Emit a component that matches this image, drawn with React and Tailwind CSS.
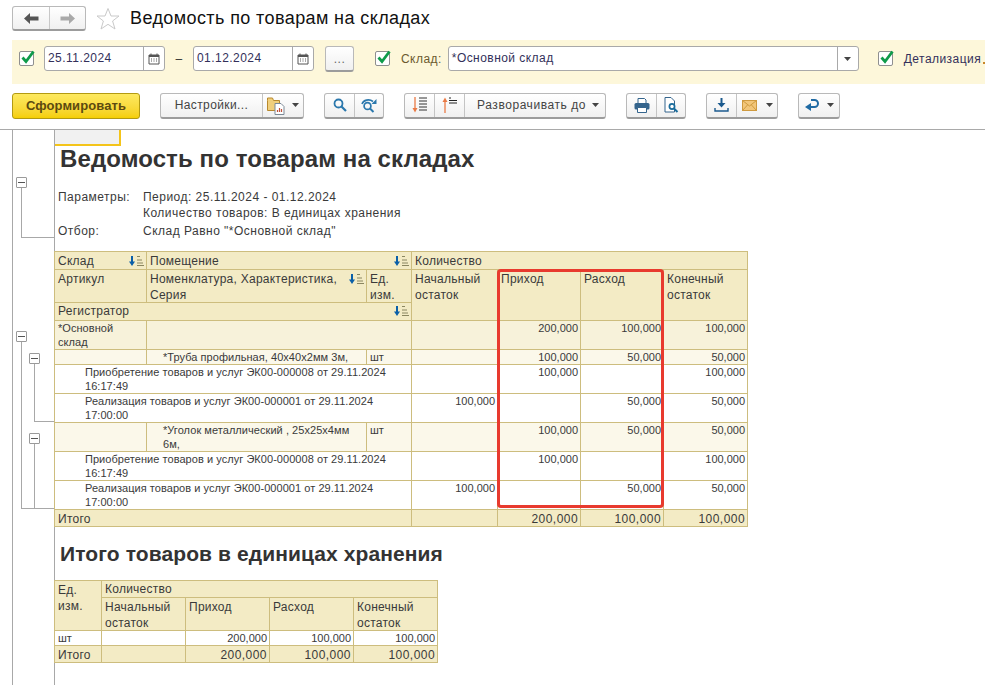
import React from "react";

const Caret = () => (
  <svg width="7" height="4" viewBox="0 0 7 4" className="shrink-0"><path d="M0 0h7L3.5 4z" fill="#444" /></svg>
);
const Check = () => (
  <span className="relative block w-[15px] h-[15px] border border-[#8f8f8f] rounded-[2px] bg-white shrink-0">
    <svg width="17" height="16" viewBox="0 0 17 16" className="absolute left-[-1px] top-[-3px]">
      <path d="M3.5 8.5 7 12.5 14.5 2.500" fill="none" stroke="#0f9b4a" strokeWidth="2.8" />
    </svg>
  </span>
);
const Cal = () => (
  <svg width="12" height="12" viewBox="0 0 12 12">
    <path d="M1 2h10v9H1z" fill="#fff" stroke="#555" />
    <path d="M1 2h10v2H1z" fill="#555" />
    <path d="M3 0.5v2M9 0.5v2" stroke="#555" />
    <path d="M3 6h1M5.5 6h1M8 6h1M3 8h1M5.5 8h1M8 8h1" stroke="#555" />
  </svg>
);
const SortIcon = () => (
  <svg width="17" height="12" viewBox="0 0 17 12" className="shrink-0">
    <path d="M4 1v6" stroke="#0a5fa8" strokeWidth="2" />
    <path d="M1 6.500h6L4 11z" fill="#0a5fa8" />
    <path d="M9 1.500h3M9 5h5M9 8h6M9 10.500h7" stroke="#8a8660" strokeWidth="1" />
  </svg>
);
const Seg = ({ className = "", children }) => (
  <div className={`flex items-center justify-center h-full border-r border-[#c4c4c4] last:border-r-0 ${className}`}>{children}</div>
);
const Group = ({ className = "", children }) => (
  <div className={`flex items-stretch h-[26px] rounded-[3px] border border-[#b9b9b9] border-b-[#9c9c9c] border-b-2 bg-gradient-to-b from-white to-[#f0f0f0] shrink-0 ${className}`}>{children}</div>
);

const Cell = ({ className = "", children, ...rest }) => (
  <td {...rest} className={`border border-[#cdbd7e] align-top p-0 overflow-hidden ${className}`}>{children}</td>
);
const H = ({ className = "pt-[1px]", sort, nudge, children, ...rest }) => (
  <Cell {...rest} className={`bg-[#f3ebc5] text-[12px] leading-[16px] tracking-[0.25px] text-[#3a3a3a] pl-[3px] ${className}`}>
    {sort ? (
      <div className={`flex justify-between ${nudge ? "translate-y-[1px]" : ""}`}>
        <span>{children}</span>
        <span className="pt-[2px] pr-[1px]"><SortIcon /></span>
      </div>
    ) : nudge ? <div className="translate-y-[1px]">{children}</div> : children}
  </Cell>
);
const Num = ({ bg, size = "s", children }) => (
  <Cell className={`${bg} text-right pr-[2px] ${size === "s" ? "text-[11px] leading-[14px]" : "text-[12px] leading-[16px] tracking-[0.45px]"} text-[#3a3a3a]`}>
    {size === "s" ? children : <div className="translate-y-[1px]">{children}</div>}
  </Cell>
);
const Txt = ({ className = "", children, ...rest }) => (
  <Cell {...rest} className={`text-[11px] leading-[14px] tracking-[0.05px] text-[#3a3a3a] ${className}`}>{children}</Cell>
);

const DocRow = ({ n, a, b, c, d, t }) => (
  <tr className="h-[29px]">
    <Txt colSpan={3} className="bg-white pl-[30px]">{n}<br />{t}</Txt>
    <Num bg="bg-white">{a}</Num><Num bg="bg-white">{b}</Num><Num bg="bg-white">{c}</Num><Num bg="bg-white">{d}</Num>
  </tr>
);
const NomRow = ({ h, children, ...v }) => (
  <tr className={h}>
    <Cell className="bg-[#fbf8ea]" />
    <Txt className="bg-[#fbf8ea] pl-[16px] pr-[10px]">{children}</Txt>
    <Txt className="bg-[#fbf8ea] pl-[3px]">шт</Txt>
    <Num bg="bg-[#fbf8ea]" />
    <Num bg="bg-[#fbf8ea]">{v.a}</Num><Num bg="bg-[#fbf8ea]">{v.b}</Num><Num bg="bg-[#fbf8ea]">{v.c}</Num>
  </tr>
);

const Minus = ({ x, y }) => (
  <span className="absolute w-[11px] h-[11px] border border-[#9a9a9a] bg-white flex items-center justify-center rounded-[1px]" style={{ left: x, top: y }}>
    <span className="block w-[7px] h-px bg-[#555]" />
  </span>
);
const Tree = ({ x, y, h, w }) => (
  <span className="absolute border-l border-b border-[#a8a8a8]" style={{ left: x, top: y, height: h, width: w }} />
);

export default function App() {
  return (
    <div className="w-[985px] h-[685px] overflow-hidden bg-white font-['Liberation_Sans',Arial,sans-serif] text-[#333]">
      {/* title bar */}
      <div className="flex items-center h-[40px] pl-[12px] pb-[3px]">
        <div className="flex h-[25px] w-[74px] rounded-[3px] border border-[#b9b9b9] border-b-2 border-b-[#9c9c9c] bg-gradient-to-b from-white to-[#f0f0f0]">
          <div className="w-[37px] flex items-center justify-center border-r border-[#c8c8c8]">
            <svg width="15" height="11" viewBox="0 0 15 11"><path d="M0 5.500 6 0v3.500h8.500v4H6V11z" fill="#555" /></svg>
          </div>
          <div className="flex-1 flex items-center justify-center">
            <svg width="15" height="11" viewBox="0 0 15 11"><path d="M15 5.500 9 0v3.500H.5v4H9V11z" fill="#a9a9a9" /></svg>
          </div>
        </div>
        <svg width="24" height="24" viewBox="0 0 24 24" className="ml-[10px]">
          <path d="M12 1.500 15 9h8l-6.400 5 2.400 8-7-4.700L5 22l2.400-8L1 9h8z" fill="#fff" stroke="#c9c9c9" />
        </svg>
        <div className="ml-[10px] text-[18px] tracking-[0.4px] text-[#111]">Ведомость по товарам на складах</div>
      </div>

      {/* filter band */}
      <div className="flex items-center ml-[12px] h-[44px] bg-[#fdf7da] pl-[7px] pb-[7px] text-[12px] tracking-[0.45px] whitespace-nowrap overflow-hidden">
        <Check />
        <div className="ml-[10px] w-[121px] h-[25px] shrink-0 border border-[#a9a9a9] rounded-[3px] bg-white flex">
          <div className="flex-1 pl-[3px] leading-[23px] text-[#33305a]">25.11.2024</div>
          <div className="w-[21px] border-l border-[#a9a9a9] flex items-center justify-center"><Cal /></div>
        </div>
        <div className="w-[28px] shrink-0 text-center text-[#333]">–</div>
        <div className="w-[121px] h-[25px] shrink-0 border border-[#a9a9a9] rounded-[3px] bg-white flex">
          <div className="flex-1 pl-[3px] leading-[23px] text-[#33305a]">01.12.2024</div>
          <div className="w-[21px] border-l border-[#a9a9a9] flex items-center justify-center"><Cal /></div>
        </div>
        <div className="ml-[11px] w-[29px] h-[26px] shrink-0 rounded-[3px] border border-[#b9b9b9] border-b-2 border-b-[#9c9c9c] bg-gradient-to-b from-white to-[#f0f0f0] text-center leading-[24px] text-[#666]">...</div>
        <div className="ml-[21px]"><Check /></div>
        <div className="ml-[11px] text-[#6b5a2e]">Склад:</div>
        <div className="ml-[6px] w-[411px] h-[25px] shrink-0 border border-[#a9a9a9] rounded-[3px] bg-white flex">
          <div className="flex-1 pl-[3px] leading-[23px] text-[#33305a]">*Основной склад</div>
          <div className="w-[21px] border-l border-[#a9a9a9] flex items-center justify-center"><Caret /></div>
        </div>
        <div className="ml-[19px]"><Check /></div>
        <div className="ml-[11px] text-[#33305a]">Детализация</div>
        <span className="ml-[2px] mt-[9px] block w-[2px] h-[2px] bg-[#c8872a] shrink-0" />
      </div>

      {/* toolbar */}
      <div className="flex items-center h-[46px] pl-[12px] pb-[2px] text-[12px] tracking-[0.55px] text-[#444] border-b border-[#a9a9a9]">
        <div className="w-[128px] h-[26px] rounded-[3px] border border-[#b39a12] bg-gradient-to-b from-[#fde95e] to-[#f5cf00] text-center leading-[24px] font-bold text-[#5c4a10] text-[13px] tracking-[0.1px]">Сформировать</div>
        <Group className="ml-[20px] w-[144px]">
          <Seg className="w-[102px] tracking-[0.4px]">Настройки...</Seg>
          <Seg className="flex-1 gap-[7px]">
            <svg width="18" height="19" viewBox="0 0 18 19">
              <path d="M.5 4.500V2h5l1 2.500h6v10H.5z" fill="#f0cf7c" stroke="#b8892d" />
              <path d="M8 7.500h6l3 3v8H8z" fill="#fff" stroke="#7c8a97" />
              <path d="M10.500 16v-2M12.500 16v-4M14.500 16v-3" stroke="#c0503a" strokeWidth="1.2" />
            </svg>
            <Caret />
          </Seg>
        </Group>
        <Group className="ml-[20px] w-[60px]">
          <Seg className="w-[30px]">
            <svg width="14" height="14" viewBox="0 0 14 14"><circle cx="5.500" cy="5.500" r="4" fill="none" stroke="#2b78ad" strokeWidth="1.8" /><path d="m8.500 8.500 4.500 4.500" stroke="#2b78ad" strokeWidth="2.2" /></svg>
          </Seg>
          <Seg className="flex-1">
            <svg width="16" height="15" viewBox="0 0 16 15"><circle cx="6.500" cy="8" r="3.400" fill="none" stroke="#2b78ad" strokeWidth="1.7" /><path d="m9 10.500 3.500 3.500" stroke="#2b78ad" strokeWidth="2" /><path d="M1 6C2.500 2 8 .5 12 3.500" fill="none" stroke="#2b78ad" strokeWidth="1.6" /><path d="M15.500 1v5h-5z" fill="#2b78ad" /></svg>
          </Seg>
        </Group>
        <Group className="ml-[20px] w-[202px]">
          <Seg className="w-[30px]">
            <svg width="16" height="16" viewBox="0 0 16 16"><path d="M3 0v12" stroke="#ea7a45" strokeWidth="1.3" /><path d="M.5 11h5L3 15.500z" fill="#ea7a45" /><path d="M7 1h8M7 4h8M7 7h8M7 10h8M7 13h8" stroke="#333" strokeWidth="1" /></svg>
          </Seg>
          <Seg className="w-[30px]">
            <svg width="16" height="16" viewBox="0 0 16 16"><path d="M3 4v12" stroke="#ea7a45" strokeWidth="1.3" /><path d="M.5 5h5L3 .5z" fill="#ea7a45" /><path d="M7 1h2M7 3.500h8M7 6h8" stroke="#222" strokeWidth="1.1" /></svg>
          </Seg>
          <Seg className="flex-1 gap-[6px] pl-[6px]">Разворачивать до<Caret /></Seg>
        </Group>
        <Group className="ml-[20px] w-[60px]">
          <Seg className="w-[30px]">
            <svg width="16" height="15" viewBox="0 0 16 15"><path d="M4 5V.5h6.500L12 2v3" fill="#fff" stroke="#35658d" /><rect x=".5" y="5" width="15" height="6.500" rx="1.500" fill="#35658d" /><path d="M3.500 9.500h9v5h-9z" fill="#fff" stroke="#35658d" /></svg>
          </Seg>
          <Seg className="flex-1">
            <svg width="15" height="16" viewBox="0 0 15 16"><path d="M1 .5h6l3.500 3.500v11H1z" fill="#fff" stroke="#35658d" /><circle cx="8" cy="9.500" r="2.600" fill="#fff" stroke="#1a6c9c" strokeWidth="1.7" /><path d="m10 11.500 3.500 3.500" stroke="#1a6c9c" strokeWidth="2" /></svg>
          </Seg>
        </Group>
        <Group className="ml-[20px] w-[72px]">
          <Seg className="w-[30px]">
            <svg width="15" height="14" viewBox="0 0 15 14"><path d="M6.500 0h2v5h3L7.500 9.500 3.500 5h3z" fill="#1b5a8e" /><path d="M1 10v3h13v-3" fill="none" stroke="#1b5a8e" strokeWidth="1.4" /></svg>
          </Seg>
          <Seg className="flex-1 gap-[9px]">
            <svg width="15" height="11" viewBox="0 0 15 11"><rect x=".5" y=".5" width="14" height="10" fill="#f2c67a" stroke="#cf9a3f" /><path d="m.5.5 7 5.500 7-5.500M.5 10.500l5-5.500M14.500 10.500l-5-5.500" fill="none" stroke="#cf9a3f" /></svg>
            <Caret />
          </Seg>
        </Group>
        <Group className="ml-[20px] w-[42px]">
          <Seg className="flex-1 gap-[8px]">
            <svg width="14" height="13" viewBox="0 0 14 13"><path d="M6 1h3.500a3.500 3.500 0 0 1 0 7H5" fill="none" stroke="#1f6aa3" strokeWidth="2" /><path d="M6 4v8L0 8z" fill="#1f6aa3" /></svg>
            <Caret />
          </Seg>
        </Group>
      </div>

      {/* spreadsheet */}
      <div className="flex ml-[12px] h-[555px]">
        <div className="relative w-[43px] shrink-0 border-l border-r border-[#a8a8a8]">
          <Tree x={8} y={57} h={51} w={33} />
          <Minus x={3} y={47} />
          <Tree x={8} y={211} h={168} w={33} />
          <Minus x={3} y={201} />
          <Tree x={21} y={232} h={60} w={20} />
          <Minus x={16} y={223} />
          <Tree x={21} y={313} h={66} w={20} />
          <Minus x={16} y={303} />
        </div>

        <div className="relative flex-1">
          {/* current-cell marker */}
          <div className="absolute left-0 top-0 w-[66px] h-[16px] bg-[#f1f1f1] border-r-2 border-b-2 border-[#f4c41a]" />

          <h1 className="pt-[15px] pl-[5px] h-[59px] text-[24px] leading-[28px] font-bold text-[#333] tracking-[0.1px]">Ведомость по товарам на складах</h1>

          <div className="pl-[3px] h-[62px] text-[12px] leading-[16px] tracking-[0.48px] text-[#3a3a3a] grid grid-cols-[85px_1fr] grid-rows-[16px_18px_16px] content-start">
            <div>Параметры:</div><div>Период: 25.11.2024 - 01.12.2024</div>
            <div /><div>Количество товаров: В единицах хранения</div>
            <div>Отбор:</div><div>Склад Равно "*Основной склад"</div>
          </div>

          <table className="table-fixed border-collapse w-[693px] ml-[-1px]">
            <colgroup>
              <col className="w-[92px]" /><col className="w-[220px]" /><col className="w-[45px]" />
              <col className="w-[86px]" /><col className="w-[83px]" /><col className="w-[83px]" /><col className="w-[84px]" />
            </colgroup>
            <tbody>
              <tr className="h-[18px]">
                <H sort>Склад</H>
                <H sort colSpan={2}>Помещение</H>
                <H colSpan={4}>Количество</H>
              </tr>
              <tr className="h-[33px]">
                <H className="pt-0" nudge>Артикул</H>
                <H sort className="pt-0" nudge>Номенклатура, Характеристика,<br />Серия</H>
                <H className="pt-0" nudge>Ед.<br />изм.</H>
                <H rowSpan={2}>Начальный<br />остаток</H>
                <H rowSpan={2}>Приход</H>
                <H rowSpan={2}>Расход</H>
                <H rowSpan={2}>Конечный<br />остаток</H>
              </tr>
              <tr className="h-[18px]"><H sort colSpan={3} className="pt-0">Регистратор</H></tr>
              <tr className="h-[29px]">
                <Txt className="bg-[#f7f2da] pl-[3px]">*Основной<br />склад</Txt>
                <Cell colSpan={2} className="bg-[#f7f2da]" />
                <Num bg="bg-[#f7f2da]" />
                <Num bg="bg-[#f7f2da]">200,000</Num><Num bg="bg-[#f7f2da]">100,000</Num><Num bg="bg-[#f7f2da]">100,000</Num>
              </tr>
              <NomRow h="h-[15px]" a="100,000" b="50,000" c="50,000">*Труба профильная, 40x40x2мм 3м,</NomRow>
              <DocRow n="Приобретение товаров и услуг ЭК00-000008 от 29.11.2024" t="16:17:49" b="100,000" d="100,000" />
              <DocRow n="Реализация товаров и услуг ЭК00-000001 от 29.11.2024" t="17:00:00" a="100,000" c="50,000" d="50,000" />
              <NomRow h="h-[29px]" a="100,000" b="50,000" c="50,000">*Уголок металлический , 25x25x4мм 6м,</NomRow>
              <DocRow n="Приобретение товаров и услуг ЭК00-000008 от 29.11.2024" t="16:17:49" b="100,000" d="100,000" />
              <DocRow n="Реализация товаров и услуг ЭК00-000001 от 29.11.2024" t="17:00:00" a="100,000" c="50,000" d="50,000" />
              <tr className="h-[17px]">
                <H colSpan={3} className="pt-0" nudge>Итого</H>
                <Num size="l" bg="bg-[#f3ebc5]" />
                <Num size="l" bg="bg-[#f3ebc5]">200,000</Num><Num size="l" bg="bg-[#f3ebc5]">100,000</Num><Num size="l" bg="bg-[#f3ebc5]">100,000</Num>
              </tr>
            </tbody>
          </table>

          {/* red annotation */}
          <div className="absolute left-[442px] top-[139px] w-[167px] h-[239px] border-[3px] border-[#e83a2e] rounded-[4px] pointer-events-none" />

          <h2 className="pt-[13px] pl-[5px] h-[53px] text-[21px] leading-[28px] font-bold text-[#333] tracking-[0.1px]">Итого товаров в единицах хранения</h2>

          <table className="table-fixed border-collapse w-[383px] ml-[-1px]">
            <colgroup>
              <col className="w-[47px]" /><col className="w-[84px]" /><col className="w-[84px]" /><col className="w-[84px]" /><col className="w-[84px]" />
            </colgroup>
            <tbody>
              <tr className="h-[17px]">
                <H rowSpan={2}>Ед.<br />изм.</H>
                <H colSpan={4} className="pt-0">Количество</H>
              </tr>
              <tr className="h-[33px]">
                <H className="pt-0" nudge>Начальный<br />остаток</H><H className="pt-0" nudge>Приход</H><H className="pt-0" nudge>Расход</H><H className="pt-0" nudge>Конечный<br />остаток</H>
              </tr>
              <tr className="h-[15px]">
                <Txt className="bg-white pl-[3px]">шт</Txt>
                <Num bg="bg-white" /><Num bg="bg-white">200,000</Num><Num bg="bg-white">100,000</Num><Num bg="bg-white">100,000</Num>
              </tr>
              <tr className="h-[17px]">
                <H className="pt-0" nudge>Итого</H>
                <Num size="l" bg="bg-[#f3ebc5]" /><Num size="l" bg="bg-[#f3ebc5]">200,000</Num><Num size="l" bg="bg-[#f3ebc5]">100,000</Num><Num size="l" bg="bg-[#f3ebc5]">100,000</Num>
              </tr>
            </tbody>
          </table>
        </div>
      </div>
    </div>
  );
}
